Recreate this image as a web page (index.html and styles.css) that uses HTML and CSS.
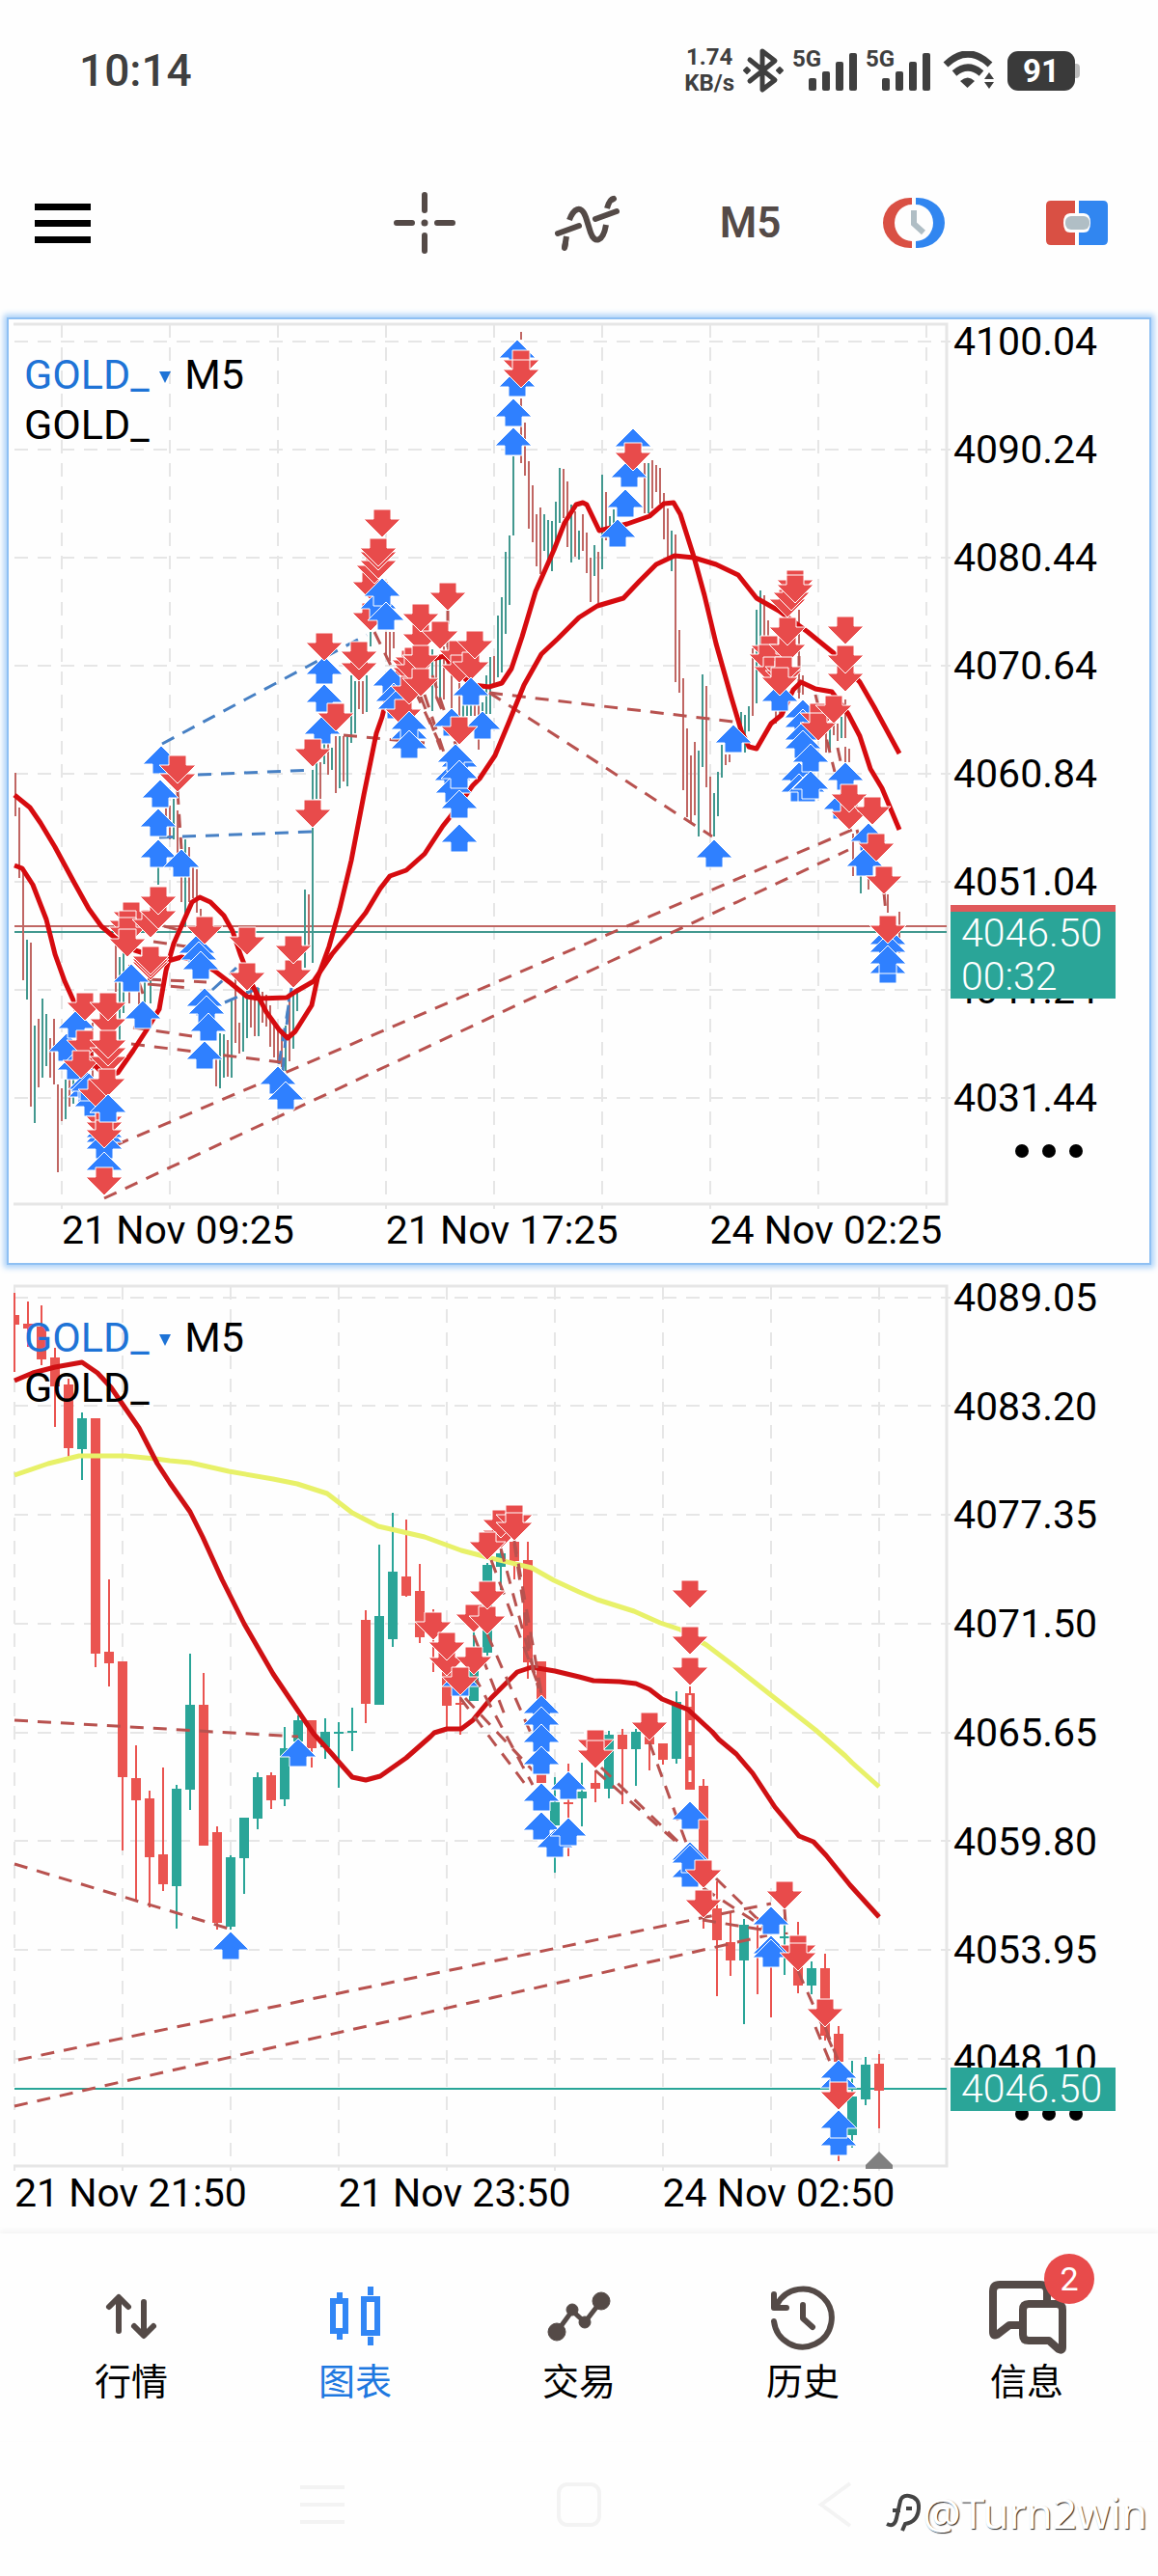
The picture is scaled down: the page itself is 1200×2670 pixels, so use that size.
FILE: index.html
```html
<!DOCTYPE html>
<html lang="zh-CN">
<head>
    <meta charset="UTF-8">
    <meta name="viewport" content="width=device-width, initial-scale=1.0">
    <title>GOLD_ M5</title>
    <link rel="stylesheet" href="styles.css">
</head>
<body>
    <div class="status-bar">
        <span class="clock">10:14</span>
        <div class="status-icons">
            <div class="speed"><span>1.74</span><span>KB/s</span></div>
            <svg class="bluetooth" width="42" height="48" viewBox="0 0 42 48" fill="none" stroke="#3f3f3f" stroke-width="5" stroke-linejoin="round" stroke-linecap="round">
                <path d="M7 13l26 21-13 10V4l13 10L7 35"/>
                <path d="M4 21l3 3-3 3-3-3zM38 21l3 3-3 3-3-3z" fill="#3f3f3f" stroke-width="2"/>
            </svg>
            <div class="signal">
                <span>5G</span>
                <svg width="50" height="40" viewBox="0 0 50 40" fill="#3f3f3f"><rect y="26" width="8" height="13" rx="2"/><rect x="14" y="19" width="8" height="20" rx="2"/><rect x="28" y="9" width="8" height="30" rx="2"/><rect x="42" width="8" height="39" rx="2"/></svg>
            </div>
            <div class="signal">
                <span>5G</span>
                <svg width="50" height="40" viewBox="0 0 50 40" fill="#3f3f3f"><rect y="26" width="8" height="13" rx="2"/><rect x="14" y="19" width="8" height="20" rx="2"/><rect x="28" y="9" width="8" height="30" rx="2"/><rect x="42" width="8" height="39" rx="2"/></svg>
            </div>
            <svg class="wifi" width="54" height="40" viewBox="0 0 54 40">
                <path d="M3 14Q26 -8 49 14M12 23Q26 11 40 23" fill="none" stroke="#3f3f3f" stroke-width="7"/>
                <path d="M18 31q8-7 15 0l-7.500 7zM48 22l5 7H43zM48 39l5-7H43z" fill="#3f3f3f"/>
            </svg>
            <div class="battery">91</div>
        </div>
    </div>

    <header class="toolbar">
        <button class="menu" aria-label="Menu"><i></i><i></i><i></i></button>
        <nav class="tools">
            <button aria-label="Crosshair">
                <svg width="66" height="66" viewBox="0 0 66 66" stroke="#544a47" stroke-width="6" stroke-linecap="round"><path d="M33 4v16M33 46v16M4 33h16M46 33h16"/><circle cx="33" cy="33" r="3.500" fill="#544a47" stroke="none"/></svg>
            </button>
            <button aria-label="Indicators">
                <svg width="70" height="60" viewBox="0 0 70 60" fill="none" stroke="#544a47" stroke-width="6" stroke-linecap="round"><path d="M4 41l22-8M43 26l22-8"/><path d="M11 56l2-12M16 27C20 16 28 10 33 24L38 40C42 52 51 50 54 32M55 15C57 8 59 5 62 5" stroke-linecap="butt"/><path d="M11 56l1-5M60 6l2-1"/></svg>
            </button>
            <button class="period">M5</button>
            <button aria-label="One click trading">
                <svg width="66" height="54" viewBox="0 0 66 54"><path d="M31 1H29A28 26 0 0 0 29 53H31V46A18 19 0 0 1 31 8Z" fill="#d95044"/><path d="M35 1H37A28 26 0 0 1 37 53H35V46A18 19 0 0 0 35 8Z" fill="#3186f0"/><path d="M33 14v14l10 9" fill="none" stroke="#b0bec5" stroke-width="6"/></svg>
            </button>
            <button aria-label="New order">
                <svg width="66" height="48" viewBox="0 0 66 48"><path d="M6 1h25v13h-5q-7 0-7 10t7 10h5v13H6q-5 0-5-5V6q0-5 5-5z" fill="#d95044"/><path d="M35 1h25q5 0 5 5v36q0 5-5 5H35V34h5q7 0 7-10t-7-10h-5z" fill="#3186f0"/><rect x="21" y="17" width="25" height="14" rx="6" fill="#b0bec5"/></svg>
            </button>
        </nav>
    </header>

    <main>
        <section class="chart active" id="chart-top">
            <svg class="plot" viewBox="9 331 976 922" preserveAspectRatio="none"></svg>
            <ol class="prices">
                <li>4100.04</li><li>4090.24</li><li>4080.44</li><li>4070.64</li>
                <li>4060.84</li><li>4051.04</li><li>4041.24</li><li>4031.44</li>
            </ol>
            <div class="times"><span>21 Nov 09:25</span><span>21 Nov 17:25</span><span>24 Nov 02:25</span></div>
            <div class="legend">
                <div><a href="#">GOLD_ <i></i></a>M5</div>
                <div>GOLD_</div>
            </div>
            <button class="more" aria-label="More"><i></i><i></i><i></i></button>
            <div class="price-tag ask"><span>4046.50</span><span>00:32</span></div>
        </section>

        <section class="chart" id="chart-bottom">
            <svg class="plot" viewBox="9 1329 976 922" preserveAspectRatio="none"></svg>
            <ol class="prices">
                <li>4089.05</li><li>4083.20</li><li>4077.35</li><li>4071.50</li>
                <li>4065.65</li><li>4059.80</li><li>4053.95</li><li>4048.10</li>
            </ol>
            <div class="times"><span>21 Nov 21:50</span><span>21 Nov 23:50</span><span>24 Nov 02:50</span></div>
            <div class="legend">
                <div><a href="#">GOLD_ <i></i></a>M5</div>
                <div>GOLD_</div>
            </div>
            <button class="more" aria-label="More"><i></i><i></i><i></i></button>
            <div class="price-tag"><span>4046.50</span></div>
        </section>
    </main>

    <nav class="tabs">
        <a href="#">
            <svg width="66" height="72" viewBox="0 0 66 72" fill="none" stroke="#544a47" stroke-width="6" stroke-linecap="round" stroke-linejoin="round"><path d="M20 51V17M10 26l10-10 10 10M46 21v34M36 46l10 10 10-10"/></svg>
            行情
        </a>
        <a href="#" class="current">
            <svg width="66" height="72" viewBox="0 0 66 72" fill="none" stroke="#3186f5" stroke-width="6"><path d="M17 11v9M17 51v9M49 5v9M49 57v9"/><path d="M10 20h13v31H10zM42 18h14v35H42z"/></svg>
            图表
        </a>
        <a href="#">
            <svg width="66" height="72" viewBox="0 0 66 72" fill="#544a47" stroke="#544a47"><path d="M10 52L26 30l13 12L56 20" fill="none" stroke-width="5"/><circle cx="10" cy="52" r="9"/><circle cx="26" cy="29" r="6"/><circle cx="39" cy="42" r="6"/><circle cx="56" cy="20" r="9"/></svg>
            交易
        </a>
        <a href="#">
            <svg width="66" height="72" viewBox="0 0 66 72" fill="none" stroke="#544a47" stroke-width="6" stroke-linecap="round" stroke-linejoin="round"><path d="M3 41A30 30 0 1 0 6 24M3 13v14h13"/><path d="M33 24v14l10 9"/></svg>
            历史
        </a>
        <a href="#">
            <svg width="82" height="78" viewBox="0 0 82 78" fill="none" stroke="#544a47" stroke-width="8" stroke-linejoin="round"><path d="M35 48H23L10 58q-4 2-4-3V13q0-7 7-7h42q7 0 7 7v10"/><path d="M43 26h29q6 0 6 6v39q0 4-4 2L64 64H43q-6 0-6-6V32q0-6 6-6z"/></svg>
            信息
            <b class="badge">2</b>
        </a>
    </nav>

    <footer class="system-nav">
        <button aria-label="Recents"><svg width="46" height="48" viewBox="0 0 46 48"><path d="M0 6h46M0 24h46M0 42h46"/></svg></button>
        <button aria-label="Home"><svg width="46" height="48" viewBox="0 0 46 48"><rect x="2" y="3" width="42" height="42" rx="9"/></svg></button>
        <button aria-label="Back"><svg width="46" height="48" viewBox="0 0 46 48"><path d="M38 2L8 24l30 22"/></svg></button>
        <div class="watermark">
            <svg width="40" height="44" viewBox="0 0 40 44" fill="none" stroke-width="3"><path d="M3 34q8 4 10-6l4-18q2-6 9-5 11 2 10 13-1 14-14 16l-3 7M9 20h8M23 18h6"/></svg>
            <span>@Turn2win</span>
        </div>
    </footer>

    <script src="charts.js"></script>
</body>
</html>
```
FILE: styles.css
```css
* {
    box-sizing: border-box;
}
body {
    margin: 0;
    background: #fefefe;
    font-family: Roboto, "Noto Sans CJK SC", sans-serif;
    color: #000;
}
button {
    padding: 0;
    border: none;
    background: none;
    font-family: inherit;
    cursor: pointer;
}
a {
    color: inherit;
    text-decoration: none;
}

/* status bar */
.status-bar {
    display: flex;
    justify-content: space-between;
    align-items: center;
    height: 146px;
    padding: 0 86px 0 82px;
    color: #3f3f3f;
}
.clock {
    font-size: 46px;
    font-weight: 500;
}
.status-icons {
    display: flex;
    align-items: center;
    gap: 9px;
}
.speed {
    display: flex;
    flex-direction: column;
    align-items: center;
    font-size: 24px;
    font-weight: 700;
    line-height: 27px;
}
.signal {
    position: relative;
    width: 67px;
    height: 48px;
    padding: 6px 0 0 17px;
}
.signal span {
    position: absolute;
    left: 0;
    top: 0;
    font-size: 24px;
    font-weight: 700;
    line-height: 24px;
}
.wifi {
    margin: 0 4px;
}
.battery {
    position: relative;
    width: 70px;
    height: 41px;
    border-radius: 11px;
    background: #3a3a3a;
    color: #fff;
    font-size: 33px;
    font-weight: 700;
    line-height: 41px;
    text-align: center;
}
.battery::after {
    content: "";
    position: absolute;
    left: 70px;
    top: 13px;
    width: 5px;
    height: 15px;
    border-radius: 0 4px 4px 0;
    background: #bbb;
}

/* toolbar */
.toolbar {
    display: flex;
    justify-content: space-between;
    align-items: center;
    height: 170px;
    padding-left: 36px;
}
.menu {
    display: flex;
    flex-direction: column;
    gap: 10px;
    width: 58px;
}
.menu i {
    height: 7px;
    background: #000;
}
.tools {
    display: grid;
    grid-template-columns: repeat(5, 1fr);
    flex: 0 0 845px;
    align-items: center;
}
.tools button {
    display: flex;
    justify-content: center;
}
.tools .period {
    font-size: 44px;
    font-weight: 600;
    color: #544a47;
}

/* charts */
main {
    display: flex;
    flex-direction: column;
    gap: 16px;
    padding: 13px 7px 6px;
}
.chart {
    position: relative;
    display: grid;
    grid-template-columns: 1fr 206px;
    grid-template-rows: 922px 56px;
    border: 2px solid transparent;
    font-size: 41px;
}
.chart.active {
    border-color: #8fc0f3;
    box-shadow: 0 0 6px 3px #a9d0f8;
}
.plot {
    display: block;
    width: 100%;
    height: 922px;
}
.prices {
    display: flex;
    flex-direction: column;
    justify-content: space-between;
    height: 828px;
    margin: 1px 0 0;
    padding: 0 0 0 3px;
    list-style: none;
    line-height: 44px;
}
#chart-bottom .prices {
    height: 833px;
    margin-top: -6px;
}
.times {
    display: grid;
    grid-template-columns: repeat(3, 34.4%);
    line-height: 44px;
    white-space: nowrap;
}
.times span {
    padding-left: 55px;
}
#chart-bottom .times span {
    padding-left: 6px;
}
.legend {
    position: absolute;
    left: 16px;
    top: 31px;
    font-size: 43px;
    line-height: 52px;
}
.legend a {
    color: #1e73d6;
    margin-right: 14px;
}
.legend i {
    display: inline-block;
    vertical-align: 6px;
    border: 6px solid transparent;
    border-top: 12px solid #1e73d6;
    border-bottom: none;
}
.more {
    position: absolute;
    right: 69px;
    top: 855px;
    display: flex;
    gap: 14px;
}
.more i {
    width: 14px;
    height: 14px;
    border-radius: 50%;
    background: #000;
}
.price-tag {
    position: absolute;
    right: 35px;
    top: 814px;
    display: flex;
    flex-direction: column;
    width: 171px;
    padding-left: 11px;
    background: #2aa598;
    color: #fff;
    font-weight: 300;
    line-height: 45px;
}
.price-tag.ask {
    top: 607px;
    border-top: 7px solid #e0595b;
}

/* bottom tabs */
.tabs {
    display: grid;
    grid-template-columns: repeat(5, 1fr);
    padding: 44px 20px 0;
    height: 215px;
    box-shadow: 0 -3px 6px #f3f3f3;
}
.tabs a {
    position: relative;
    display: flex;
    flex-direction: column;
    align-items: center;
    font-size: 38px;
    line-height: 44px;
}
.tabs svg {
    height: 84px;
    margin-bottom: 4px;
}
.tabs .current {
    color: #1e78e0;
}
.badge {
    position: absolute;
    left: calc(50% + 18px);
    top: -23px;
    width: 52px;
    height: 52px;
    border-radius: 50%;
    background: #e84b4b;
    color: #fff;
    font-size: 34px;
    font-weight: 400;
    line-height: 52px;
    text-align: center;
}

/* system buttons */
.system-nav {
    position: relative;
    display: flex;
    justify-content: center;
    gap: 220px;
    padding: 42px 0 48px;
    height: 140px;
}
.system-nav svg {
    fill: none;
    stroke: #f3f3f3;
    stroke-width: 4;
}
.watermark {
    position: absolute;
    right: 11px;
    top: 46px;
    display: flex;
    align-items: center;
    color: #fff;
    font-family: "Noto Sans", sans-serif;
    font-size: 44px;
    line-height: 56px;
    text-shadow: 1px 1px 1px #222;
}
.watermark svg {
    stroke: #444;
}

/* plot parts */
.grid {
    stroke: #e6e6e6;
    stroke-width: 2;
    stroke-dasharray: 14 10;
}
.frame {
    fill: none;
    stroke: #e6e6e6;
    stroke-width: 3;
}
.average {
    fill: none;
    stroke-width: 5;
    stroke-linejoin: round;
}
.link {
    stroke-width: 3;
    stroke-dasharray: 14 10;
}
.arrow {
    stroke: #fff;
    stroke-width: 1;
}
```
FILE: charts.js
```js
const NS = "http://www.w3.org/2000/svg";
const RED = "#ea5450";
const GREEN = "#2aa598";
const DEAL_RED = "#b8524f";
const DEAL_BLUE = "#4780c4";

function add(svg, name, attrs) {
    const el = document.createElementNS(NS, name);
    for (const key in attrs) {
        el.setAttribute(key, attrs[key]);
    }
    svg.appendChild(el);
}

function line(svg, x1, y1, x2, y2, attrs) {
    add(svg, "line", Object.assign({ x1, y1, x2, y2 }, attrs));
}

function drawGrid(svg, xs, ys, top, bottom, left) {
    ys.forEach(y => line(svg, left, y, 985, y, { class: "grid" }));
    xs.forEach(x => line(svg, x, top, x, bottom + 5, { class: "grid" }));
    add(svg, "path", { class: "frame", d: `M14 ${top}H981V${bottom}H14` });
}

// bars without a body: x, high, low, direction
function drawBars(svg, text) {
    text.trim().split(/\s+/).forEach(item => {
        const [x, high, low, dir] = item.split(",");
        line(svg, x, high, x, low, { stroke: dir === "r" ? "#c06663" : "#42988f", "stroke-width": 2 });
    });
}

// candles, 14 apart: direction, high, body top, body bottom, low
function drawCandles(svg, text) {
    text.trim().split(/\s+/).forEach((item, i) => {
        const [dir, high, top, bottom, low] = item.split(",");
        const x = 15 + 14 * i;
        const fill = dir === "r" ? RED : GREEN;
        // the first candle is cut by the left edge of the plot
        const left = i === 0 ? x : x - 5;
        line(svg, x, high, x, low, { stroke: fill, "stroke-width": 2 });
        add(svg, "rect", { x: left, y: top, width: x + 5 - left, height: Math.max(bottom - top, 2), fill });
    });
}

function drawAverage(svg, points, color) {
    add(svg, "polyline", { class: "average", points, stroke: color });
}

function drawLinks(svg, list, color) {
    list.forEach(p => line(svg, p[0], p[1], p[2], p[3], { class: "link", stroke: color }));
}

// u = buy (tip on top), d = sell (tip at the bottom)
function drawArrows(svg, text) {
    text.trim().split(/\s+/).forEach(item => {
        const [dir, xs, ys] = item.split(",");
        const x = Number(xs);
        const y = Number(ys);
        const d = dir === "u"
            ? `M${x} ${y}l19 19h-10v10h-18v-10h-10z`
            : `M${x} ${y}l19 -19h-10v-10h-18v10h-10z`;
        add(svg, "path", { class: "arrow", d, fill: dir === "u" ? "#2f80ff" : "#e84b4b" });
    });
}

// upper chart
const topSvg = document.querySelector("#chart-top .plot");
drawGrid(topSvg, [64, 176, 288, 400, 512, 624, 736, 848, 960], [354, 466, 578, 690, 802, 914, 1026, 1138], 336, 1248, 15);
line(topSvg, 15, 960, 981, 960, { stroke: "#c06663", "stroke-width": 2 });
line(topSvg, 15, 966, 981, 966, { stroke: "#42988f", "stroke-width": 2 });
drawBars(topSvg, `
    16,801,846,r 20,837,910,r 24,903,1016,r 28,974,1036,g 32,977,1147,r 36,1063,1164,g 40,1056,1127,r
    44,1035,1117,g 48,1051,1105,g 52,1076,1117,r 56,1056,1124,r 60,1124,1215,r 64,1128,1162,r 68,1119,1160,g
    72,1113,1147,r 76,1100,1144,g 84,1090,1130,r 96,1060,1150,r 104,1080,1160,g 116,1050,1090,r
    120,974,1028,r 124,992,1081,g 128,985,1050,g 134,1000,1040,r 144,1010,1045,r 150,1015,1040,g 156,1010,1040,g
    164,890,917,g 172,838,867,r 176,835,870,r 180,828,870,g 184,840,885,r 188,870,935,r 192,870,960,g 196,878,935,r
    200,899,931,r 204,901,946,r 208,942,960,r 224,1098,1126,r 228,1071,1128,g 232,1072,1117,g 236,1078,1116,r
    240,1037,1117,g 244,1010,1081,r 248,1060,1092,r 252,1031,1090,g 256,1024,1076,g 260,1024,1065,r
    264,1026,1074,r 268,1024,1074,g 272,1028,1060,r 276,1031,1064,r 280,1042,1085,r 284,1060,1096,r
    288,1067,1100,r 292,1067,1106,r 296,1063,1110,g 300,1030,1100,r 304,1028,1087,g 308,1024,1048,g
    316,922,1003,g 320,927,980,r 324,798,998,g 328,790,828,g 332,790,828,r 336,770,792,g 340,770,803,r
    344,775,798,g 348,763,822,r 352,763,817,g 356,763,810,r 360,762,815,g 364,700,770,g 368,706,760,g
    372,706,735,r 376,706,740,r 380,700,738,g 384,655,670,g 400,655,680,r 404,655,685,r 408,655,672,r
    448,673,737,g 452,680,722,r 456,680,725,g 460,670,725,r 464,630,680,r 468,700,740,r 476,700,745,r
    480,730,745,g 484,728,742,g 488,728,742,g 492,730,742,r 496,730,777,r 500,728,745,g 504,700,740,g
    508,681,740,g 512,680,710,r 516,638,702,g 520,619,697,g 524,572,657,g 528,555,627,g 532,473,555,g
    540,344,352,r 540,413,480,r 544,438,493,r 548,478,548,r 552,503,562,r 556,533,587,r 560,526,595,r
    564,533,571,g 568,539,582,g 572,540,592,g 576,520,562,g 580,485,542,g 584,486,537,r 588,499,567,r
    592,523,583,g 596,530,577,r 600,550,580,g 604,533,571,r 608,552,594,r 612,578,624,r 616,565,597,g
    620,572,625,r 624,492,590,g 628,510,560,r 632,535,553,g 636,528,545,g 668,480,532,r 672,480,532,g
    676,477,527,r 680,482,510,r 684,485,522,r 688,511,559,r 692,527,577,r 696,550,592,g 700,554,707,r
    704,653,718,r 708,703,819,r 712,755,847,r 716,783,853,r 720,769,845,r 724,778,867,g 728,699,795,g
    732,711,816,r 736,805,866,r 740,822,867,g 744,800,846,g 748,772,806,g 752,782,793,r 756,782,790,r
    768,738,760,g 772,741,780,g 776,732,758,g 780,672,742,r 784,632,729,g 788,612,693,g 792,617,660,r
    796,643,665,r 804,735,750,r 808,735,745,r 828,632,724,r 832,700,720,r 856,757,780,r 860,755,779,g
    864,740,762,r 868,750,768,r 872,743,765,g 876,725,765,r 876,774,790,r 880,776,790,r 884,864,908,r
    892,903,926,g 900,903,922,r 920,927,946,r 932,945,988,r`);
drawLinks(topSvg, [[168, 771, 380, 658], [205, 803, 325, 798], [165, 868, 325, 862], [289, 1103, 302, 1024], [293, 1110, 300, 1030], [220, 1026, 245, 1003], [233, 1039, 268, 1024]], DEAL_BLUE);
drawLinks(topSvg, [
    [108, 1242, 879, 881], [120, 1187, 883, 860], [507, 718, 760, 748], [507, 718, 738, 867], [356, 762, 440, 770],
    [159, 976, 200, 982], [153, 1015, 214, 1018], [153, 1020, 195, 1024], [138, 1065, 199, 1074], [136, 1082, 291, 1101],
    [388, 655, 410, 700], [430, 716, 460, 780], [440, 720, 462, 786], [448, 700, 475, 780], [436, 722, 457, 777],
    [464, 633, 464, 700], [452, 722, 460, 740], [845, 720, 865, 800], [868, 775, 884, 850], [828, 680, 828, 725],
    [888, 860, 896, 890], [916, 925, 918, 946], [170, 960, 190, 965], [184, 820, 188, 880], [144, 1018, 148, 1030]
], DEAL_RED);
drawAverage(topSvg, "15,824 31,837 42,853 57,878 77,915 92,942 105,960 119,972 140,985 174,996 188,992 205,996 222,1006 239,1019 256,1033 268,1035 297,1034 306,1028 325,1017 344,989 364,965 379,946 394,921 404,908 421,902 440,885 459,856 467,846 490,814 497,807 513,783 528,747 543,710 561,678 578,662 600,640 619,628 646,620 663,602 680,585 699,576 719,578 742,585 765,596 784,620 807,633 837,655 864,677 891,707 906,733 932,781", "#d60b0f");
drawAverage(topSvg, "15,897 23,900 34,917 48,953 57,989 67,1017 77,1039 88,1080 99,1105 110,1116 122,1112 138,1089 151,1069 165,1046 172,1006 180,978 191,953 199,935 207,930 218,935 232,949 241,965 249,989 262,1022 276,1049 289,1067 298,1076 306,1069 323,1042 329,1014 341,981 352,942 364,892 377,824 390,760 396,743 406,703 421,690 452,682 461,680 474,697 490,710 507,712 520,708 530,693 541,660 555,613 574,570 585,542 597,523 604,521 608,523 621,550 650,543 673,535 688,522 698,521 705,533 719,577 730,617 742,667 757,720 768,757 776,774 784,776 799,750 810,741 822,715 830,707 845,714 862,717 879,740 891,763 902,797 914,817 932,860", "#d60b0f");
drawArrows(topSvg, `
    u,69,1071 u,79,1047 u,78,1090 u,90,1118 u,90,1110 u,96,1128 d,88,1058 d,88,1097 d,84,1118 u,92,1112 d,100,1148
    d,112,1114 d,112,1105 d,112,1075 d,112,1058 d,112,1097 d,111,1137 u,108,1165 u,108,1160 d,108,1176 u,112,1134
    u,108,1172 d,108,1182 d,108,1190 u,112,1134 u,108,1194 d,108,1239 u,136,999 u,148,1037
    d,136,964 d,132,973 d,132,980 d,132,992 d,156,972 d,164,963 d,164,948 d,156,1016 d,156,1013 d,156,1010
    u,167,773 u,166,808 u,164,838 u,164,870 u,188,880 d,184,821 d,184,812
    u,204,969 u,206,976 u,208,986 d,212,979 u,212,1024 u,214,1032 u,216,1050 u,212,1079
    d,256,990 d,256,1027 d,304,1024 d,304,999 u,288,1105 u,296,1121
    u,336,680 u,336,709 u,334,742 d,336,685 d,348,758 d,324,795 d,324,858 d,372,706 d,372,694
    d,384,654 d,384,622 d,388,605 d,392,600 d,392,591 d,392,587 d,396,557 u,392,612 u,396,599 u,400,624
    u,405,692 u,408,708 u,410,716 d,418,754 d,425,703 d,426,711 d,424,730 d,428,700 d,428,708 d,436,676 d,436,655
    d,436,698 d,436,722 u,424,747 u,424,737 u,424,757 d,464,633 d,456,673 d,474,693 d,476,708 d,488,705 d,492,683
    u,468,734 u,488,702 u,500,737 u,469,790 u,470,803 u,476,776 u,472,771 d,476,772 u,476,788 u,476,819 u,476,854
    u,536,352 u,536,382 d,540,392 d,540,402 u,532,413 u,532,443
    u,656,444 u,652,476 d,656,488 u,648,507 u,640,538 u,760,751 u,740,870
    d,816,640 d,820,633 d,824,620 d,824,625 d,797,688 d,795,697 d,800,710 d,816,687 d,816,669 d,812,714 d,812,710
    u,808,708 d,808,721 u,832,725 u,832,735 u,832,748 u,832,757 u,828,790 u,828,802 u,836,802 u,840,771 u,840,799
    d,876,717 d,876,698 d,876,668 d,848,758 d,848,768 d,864,750
    u,872,820 u,876,790 d,880,860 d,880,842 u,900,853 u,896,879 d,904,855 d,908,893 d,916,927
    u,920,960 u,920,968 d,920,978 u,920,990 u,920,980`);

// lower chart
const bottomSvg = document.querySelector("#chart-bottom .plot");
drawGrid(bottomSvg, [15, 127, 239, 351, 463, 575, 687, 799, 911], [1345, 1457, 1570, 1683, 1796, 1908, 2021, 2134], 1333, 2245, 15);
line(bottomSvg, 15, 2165, 981, 2165, { stroke: GREEN, "stroke-width": 2 });
drawCandles(bottomSvg, `
    r,1340,1363,1373,1422 r,1349,1372,1377,1396 r,1353,1375,1409,1415 r,1397,1407,1437,1479 r,1429,1435,1501,1510
    g,1464,1470,1502,1534 r,1470,1470,1714,1728 r,1637,1712,1724,1748 r,1722,1722,1842,1918 r,1809,1843,1866,1970
    r,1856,1864,1925,1977 r,1832,1922,1953,1960 g,1850,1854,1955,1999 g,1714,1767,1855,1876 r,1734,1767,1913,1913
    r,1893,1899,1993,2000 g,1923,1925,1997,2000 g,1884,1884,1926,1963 g,1837,1842,1885,1896 r,1837,1840,1866,1875
    g,1790,1812,1865,1872 g,1778,1783,1805,1815 r,1783,1783,1812,1832 g,1781,1795,1811,1823 g,1785,1795,1797,1853
    g,1770,1794,1796,1815 r,1669,1679,1766,1786 g,1601,1675,1767,1767 g,1568,1629,1699,1707 r,1575,1634,1654,1655
    r,1621,1649,1697,1703 r,1668,1680,1695,1733 r,1717,1730,1768,1793 r,1750,1765,1767,1798 g,1690,1720,1763,1763
    g,1620,1622,1713,1716 g,1607,1610,1624,1648 r,1575,1598,1618,1637 r,1598,1617,1723,1740 r,1722,1722,1848,1850
    g,1842,1868,1892,1941 r,1828,1868,1870,1924 g,1827,1857,1864,1893 r,1835,1848,1854,1868 g,1794,1798,1854,1864
    r,1792,1798,1813,1870 g,1792,1795,1813,1851 r,1790,1795,1808,1835 r,1807,1807,1824,1829 g,1753,1764,1823,1828
    r,1748,1755,1855,1855 r,1844,1851,1930,1999 r,1950,1978,2011,2069 r,1983,2013,2032,2048 g,1989,1995,2032,2098
    r,1987,1998,2000,2067 r,2020,2025,2038,2091 g,1977,2007,2008,2047 r,1992,2010,2058,2066 g,2033,2040,2058,2067
    r,2025,2040,2110,2115 r,2100,2108,2137,2240 g,2136,2173,2213,2226 g,2132,2140,2176,2182 r,2129,2139,2167,2206`);
drawAverage(bottomSvg, "15,1529 50,1517 82,1509 130,1509 161,1512 176,1514 197,1516 237,1525 283,1533 308,1538 339,1548 365,1568 392,1582 440,1593 478,1607 505,1614 551,1625 574,1638 600,1650 619,1658 657,1670 684,1682 705,1689 732,1705 761,1727 799,1757 845,1793 876,1820 883,1827 911,1852", "#e8f169");
drawAverage(bottomSvg, "15,1431 34,1423 57,1417 85,1412 101,1423 115,1438 128,1457 144,1480 163,1517 176,1537 197,1567 210,1593 230,1637 253,1683 283,1735 310,1775 325,1797 344,1818 350,1825 365,1842 379,1845 394,1841 421,1822 446,1800 450,1796 463,1792 478,1792 490,1783 509,1760 536,1733 551,1728 575,1732 600,1738 615,1742 642,1743 659,1745 673,1751 686,1761 713,1772 738,1795 745,1803 763,1818 780,1838 803,1873 828,1903 843,1909 856,1923 881,1954 911,1987", "#cf1013");
drawLinks(bottomSvg, [
    [15, 1783, 309, 1800], [15, 1932, 237, 1999], [19, 2135, 799, 1973], [15, 2183, 795, 2006],
    [477, 1760, 547, 1853], [482, 1760, 552, 1835], [491, 1736, 552, 1850], [505, 1694, 556, 1810], [509, 1617, 561, 1755],
    [519, 1605, 558, 1750], [533, 1600, 553, 1735], [533, 1597, 561, 1755], [491, 1695, 524, 1780],
    [617, 1835, 705, 1913], [623, 1832, 709, 1915], [673, 1806, 711, 1910], [742, 1947, 784, 1988], [729, 1957, 795, 2000],
    [728, 1990, 789, 2000], [827, 2043, 869, 2137], [845, 2101, 860, 2137], [855, 2101, 869, 2137], [813, 1979, 815, 2005]
], DEAL_RED);
line(bottomSvg, 715, 1757, 715, 1852, { stroke: "#fff", "stroke-width": 3, "stroke-dasharray": "12 14" });
drawArrows(bottomSvg, `
    u,239,2002 u,309,1802 d,449,1700 d,463,1737 d,463,1721 u,477,1729 d,491,1736 d,477,1757
    d,491,1692 d,505,1694 d,505,1668 d,519,1605 d,519,1594 d,505,1617 d,533,1589 d,533,1597
    u,561,1757 u,561,1769 u,561,1810 u,561,1787 u,561,1810 u,561,1848 u,561,1878 u,575,1896 u,589,1836 u,589,1884
    d,617,1822 d,617,1833 d,673,1804 d,715,1667 d,715,1715 d,715,1747
    u,715,1867 u,715,1927 u,715,1909 u,715,1912 d,729,1957 d,729,1988
    u,799,2006 u,799,2010 u,799,1976 d,813,1979 d,827,2035 d,827,2043 d,855,2101
    u,869,2145 u,869,2135 d,869,2187 u,869,2205 u,869,2187`);
add(bottomSvg, "path", { d: "M911 2230l14 14v4h-28v-4z", fill: "#808080" });
```
